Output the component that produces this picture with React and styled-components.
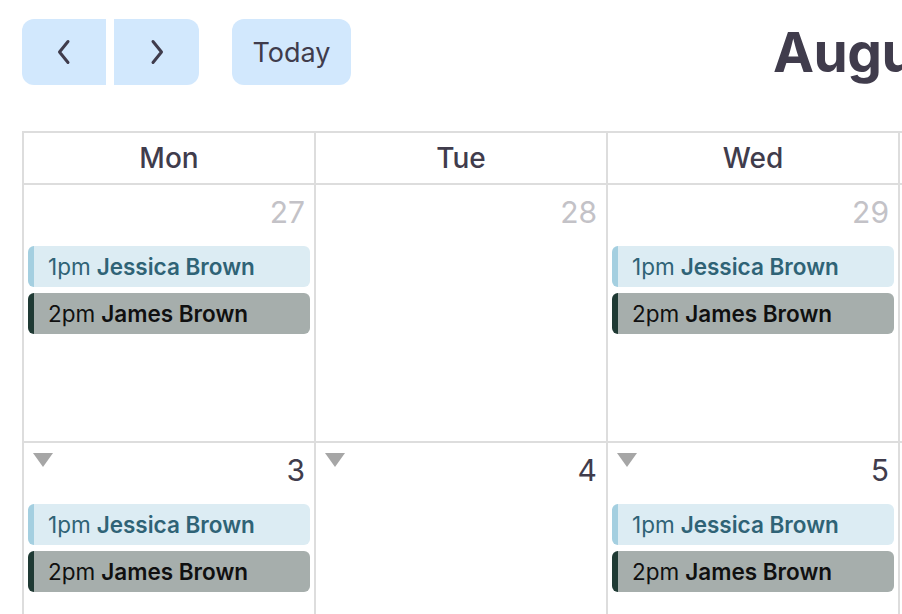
import React from "react";
import styled, { createGlobalStyle } from "styled-components";

const Global = createGlobalStyle`
  html, body {
    margin: 0;
    padding: 0;
    overflow: hidden;
    background: #ffffff;
  }
  body {
    font-family: Inter, "Noto Sans", "Liberation Sans", sans-serif;
    color: #403c4c;
  }
`;

const Page = styled.div`
  padding: 19px 0 0 22px;
  width: 2120px;
`;

const Toolbar = styled.div`
  display: flex;
  align-items: center;
  height: 66px;
  margin-bottom: 46px;
`;

const ButtonGroup = styled.div`
  display: flex;
  gap: 8px;
  margin-right: 33px;
`;

const NavButton = styled.button`
  width: ${(p) => p.$width || 85}px;
  height: 66px;
  border: none;
  background: #d2e8fd;
  color: #403c4c;
  display: flex;
  align-items: center;
  justify-content: center;
  padding: 0;
  font-family: inherit;
  font-size: 27px;
  border-radius: ${(p) =>
    p.$side === "left" ? "12px 0 0 12px" : p.$side === "right" ? "0 12px 12px 0" : "12px"};
`;

const Title = styled.h2`
  margin: 0 0 0 422px;
  font-size: 55px;
  font-weight: 650;
  letter-spacing: -0.5px;
  color: #403c4c;
  white-space: nowrap;
`;

const Grid = styled.div`
  display: grid;
  grid-template-columns: repeat(7, 292px);
  border-top: 2px solid #dddddd;
  border-left: 2px solid #dddddd;
  width: max-content;
`;

const HeadCell = styled.div`
  height: 50px;
  display: flex;
  align-items: center;
  justify-content: center;
  border-right: 2px solid #dddddd;
  border-bottom: 2px solid #dddddd;
  font-size: 28px;
  font-weight: 500;
  color: #403c4c;
`;

const DayCell = styled.div`
  height: 258px;
  border-right: 2px solid #dddddd;
  border-bottom: 2px solid #dddddd;
  display: flex;
  flex-direction: column;
  box-sizing: border-box;
`;

const DayTop = styled.div`
  display: flex;
  justify-content: space-between;
  align-items: flex-start;
  padding: 10px 9px 0 9px;
  height: 51px;
`;

const Marker = styled.span`
  width: 0;
  height: 0;
  border-left: 10px solid transparent;
  border-right: 10px solid transparent;
  border-top: 14px solid #a6a6a6;
  visibility: ${(p) => (p.$show ? "visible" : "hidden")};
`;

const DayNumber = styled.span`
  font-size: 30px;
  line-height: 34px;
  color: ${(p) => (p.$other ? "#c3c2c7" : "#403c4c")};
`;

const Events = styled.div`
  display: flex;
  flex-direction: column;
  gap: 6px;
  padding: 0 4px;
`;

const Event = styled.div`
  height: 41px;
  border-radius: 6px;
  border-left: 6px solid ${(p) => p.$bar};
  background: ${(p) => p.$bg};
  color: ${(p) => p.$fg};
  display: flex;
  align-items: center;
  padding-left: 14px;
  font-size: 22.5px;
  white-space: nowrap;
  overflow: hidden;
`;

const Time = styled.span`
  margin-right: 6px;
`;

const Name = styled.span`
  font-weight: 600;
`;

const kinds = {
  jessica: { bar: "#a4cfe0", bg: "#dcecf3", fg: "#2f6376", time: "1pm", name: "Jessica Brown" },
  james: { bar: "#1f3a34", bg: "#a6aeac", fg: "#101010", time: "2pm", name: "James Brown" },
};

const weeks = [
  [
    { n: 27, other: true, ev: ["jessica", "james"] },
    { n: 28, other: true, ev: [] },
    { n: 29, other: true, ev: ["jessica", "james"] },
    { n: 30, other: true, ev: [] },
    { n: 31, other: true, ev: [] },
    { n: 1, ev: [] },
    { n: 2, ev: [] },
  ],
  [
    { n: 3, mark: true, ev: ["jessica", "james"] },
    { n: 4, mark: true, ev: [] },
    { n: 5, mark: true, ev: ["jessica", "james"] },
    { n: 6, mark: true, ev: [] },
    { n: 7, mark: true, ev: [] },
    { n: 8, mark: true, ev: [] },
    { n: 9, mark: true, ev: [] },
  ],
];

const Chevron = ({ dir }) => (
  <svg width="16" height="26" viewBox="0 0 16 26" fill="none">
    <path
      d={dir === "left" ? "M12 2.5 L3.5 13 L12 23.5" : "M4 2.5 L12.5 13 L4 23.5"}
      stroke="#403c4c"
      strokeWidth="3"
      strokeLinecap="round"
      strokeLinejoin="round"
    />
  </svg>
);

export default function App() {
  return (
    <Page>
      <Global />
      <Toolbar>
        <ButtonGroup>
          <NavButton $side="left" $width={84}>
            <Chevron dir="left" />
          </NavButton>
          <NavButton $side="right" $width={85}>
            <Chevron dir="right" />
          </NavButton>
        </ButtonGroup>
        <NavButton $width={119}>Today</NavButton>
        <Title>August 2020</Title>
      </Toolbar>
      <Grid>
        {["Mon", "Tue", "Wed", "Thu", "Fri", "Sat", "Sun"].map((d) => (
          <HeadCell key={d}>{d}</HeadCell>
        ))}
        {weeks.flat().map((day, i) => (
          <DayCell key={i}>
            <DayTop>
              <Marker $show={day.mark} />
              <DayNumber $other={day.other}>{day.n}</DayNumber>
            </DayTop>
            <Events>
              {day.ev.map((k) => {
                const e = kinds[k];
                return (
                  <Event key={k} $bar={e.bar} $bg={e.bg} $fg={e.fg}>
                    <Time>{e.time}</Time>
                    <Name>{e.name}</Name>
                  </Event>
                );
              })}
            </Events>
          </DayCell>
        ))}
      </Grid>
    </Page>
  );
}
